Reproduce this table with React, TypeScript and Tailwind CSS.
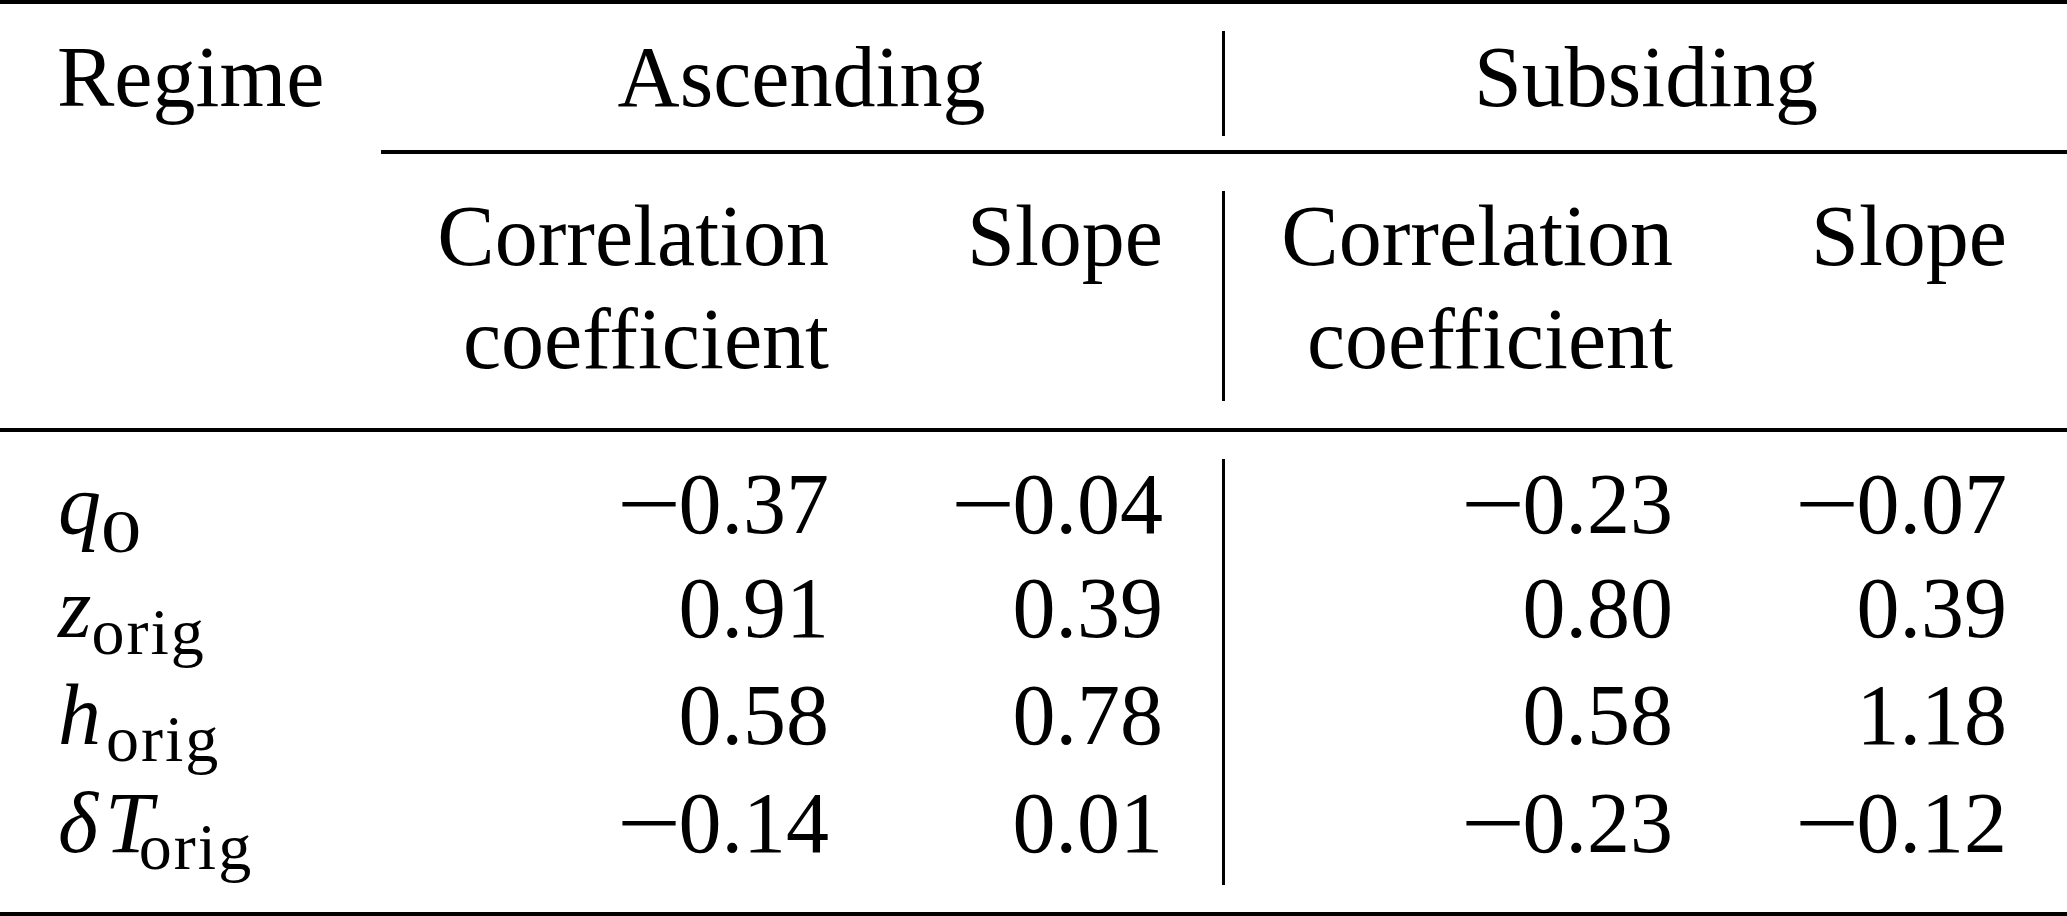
import React from "react";

type Row = { label: React.ReactNode; v: string[]; h: string };

const Sub = ({ children, extra = "" }: { children: React.ReactNode; extra?: string }) => (
  <span className={`text-[66px] tracking-[2px] align-[-17px] leading-none ${extra}`}>{children}</span>
);

const Num = ({ s }: { s: string }) =>
  s.startsWith("−") ? (
    <>
      <span className="inline-block w-[62px] origin-left scale-x-[1.33] text-left">−</span>
      {s.slice(1)}
    </>
  ) : (
    <>{s}</>
  );

const rows: Row[] = [
  {
    label: (
      <>
        <span className="italic">q</span>
        <span className="inline-block origin-left scale-x-[1.3] text-[62px] leading-none align-[-19px]">0</span>
      </>
    ),
    v: ["−0.37", "−0.04", "−0.23", "−0.07"],
    h: "h-[104px]",
  },
  {
    label: (
      <>
        <span className="italic">z</span>
        <Sub>orig</Sub>
      </>
    ),
    v: ["0.91", "0.39", "0.80", "0.39"],
    h: "h-[107px]",
  },
  {
    label: (
      <>
        <span className="italic">h</span>
        <Sub extra="ml-[5px]">orig</Sub>
      </>
    ),
    v: ["0.58", "0.78", "0.58", "1.18"],
    h: "h-[108px]",
  },
  {
    label: (
      <>
        <span className="italic">δ</span>
        <span className="ml-[7px] italic">T</span>
        <Sub extra="-ml-[14px]">orig</Sub>
      </>
    ),
    v: ["−0.14", "0.01", "−0.23", "−0.12"],
    h: "h-[107px]",
  },
];

export default function App() {
  return (
    <div className="w-[2067px] h-[916px] overflow-hidden bg-white text-black font-['Liberation_Serif',serif] text-[86px] whitespace-nowrap">
      <div className="h-[4px] bg-black" />

      <div className="mt-[27px] grid h-[105px] grid-cols-[381px_841px_845px] leading-[92px]">
        <div className="pl-[57px]">Regime</div>
        <div className="text-center">Ascending</div>
        <div className="border-l-[3px] border-black text-center">Subsiding</div>
      </div>

      <div className="mt-[14px] ml-[381px] h-[4px] bg-black" />

      <div className="mt-[37px] grid h-[210px] grid-cols-[381px_507px_334px_510px_335px]">
        <div />
        <div className="pr-[59px] text-right">
          <div className="-mt-[6.5px] leading-[103px]">
            Correlation
            <br />
            coefficient
          </div>
        </div>
        <div className="pr-[59px] text-right">
          <div className="-mt-[6.5px] leading-[103px]">Slope</div>
        </div>
        <div className="border-l-[3px] border-black pr-[59px] text-right">
          <div className="-mt-[6.5px] leading-[103px]">
            Correlation
            <br />
            coefficient
          </div>
        </div>
        <div className="pr-[60px] text-right">
          <div className="-mt-[6.5px] leading-[103px]">Slope</div>
        </div>
      </div>

      <div className="mt-[27px] h-[4px] bg-black" />

      <div className="mt-[27px] flex flex-col leading-[90px]">
        {rows.map((r, i) => (
          <div
            key={i}
            className={`grid grid-cols-[381px_507px_334px_510px_335px] ${r.h}`}
          >
            <div className="pl-[58px]">{r.label}</div>
            <div className="pr-[59px] text-right">
              <Num s={r.v[0]} />
            </div>
            <div className="pr-[59px] text-right">
              <Num s={r.v[1]} />
            </div>
            <div className="border-l-[3px] border-black pr-[59px] text-right">
              <Num s={r.v[2]} />
            </div>
            <div className="pr-[60px] text-right">
              <Num s={r.v[3]} />
            </div>
          </div>
        ))}
      </div>

      <div className="mt-[27px] h-[4px] bg-black" />
    </div>
  );
}
